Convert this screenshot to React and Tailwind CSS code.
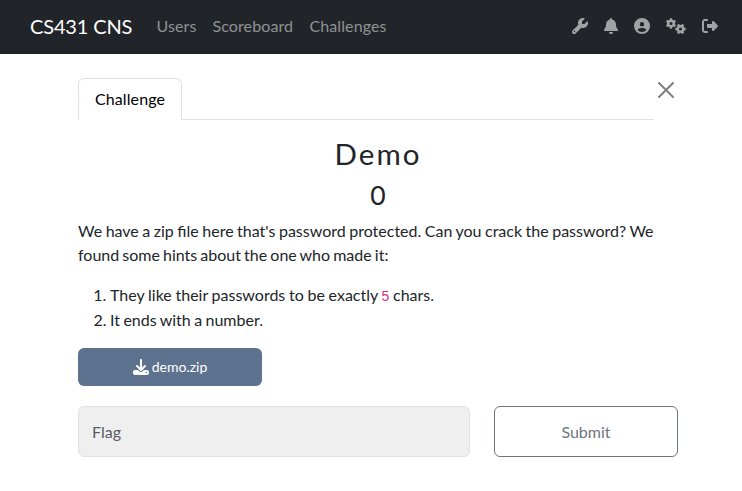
import { FaWrench, FaBell, FaCircleUser, FaGears, FaRightFromBracket, FaDownload } from "react-icons/fa6";

export default function App() {
  return (
    <div className="h-[491px] w-[742px] overflow-hidden bg-white font-[Lato,sans-serif] text-[16px] leading-6 text-[#212529]">
      <nav className="flex h-[54px] items-center border-b border-[#1b1e21] bg-[#212529] pb-px pl-[30px] pr-6 text-[#909294]">
        <span className="mr-6 w-[102.5px] whitespace-nowrap text-[20px] leading-[30px] tracking-[-0.15px] text-white">CS431 CNS</span>
        <div className="flex gap-4">
          <span className="w-10 tracking-[0.1px]">Users</span>
          <span className="w-[81px] tracking-[0.1px]">Scoreboard</span>
          <span className="tracking-[0.1px]">Challenges</span>
        </div>
        <div className="ml-auto flex items-center gap-4 text-[#a0a2a3]">
          <FaWrench className="size-4" />
          <FaBell className="h-4 w-[14px]" />
          <FaCircleUser className="size-4" />
          <FaGears className="h-4 w-5" />
          <FaRightFromBracket className="size-4" />
        </div>
      </nav>
      <main className="ml-[78px] w-[600px] pt-6">
        <div className="flex h-[42px]">
          <div className="flex w-[576px] border-b border-[#dee2e6]">
            <div className="-mb-px flex h-[42px] w-[104px] items-center justify-center rounded-t-md border border-b-0 border-[#dee2e6] bg-white pb-0.5 tracking-[0.1px] text-black">Challenge</div>
          </div>
          <svg className="ml-1 mt-1 size-4" viewBox="0 0 16 16" stroke="#7f7f7f" strokeWidth="2" strokeLinecap="round">
            <path d="M1 1l14 14M15 1L1 15" />
          </svg>
        </div>
        <h2 className="mt-4 text-center text-[29.5px] leading-[36px] tracking-[2px]">Demo</h2>
        <h3 className="mt-[7px] text-center text-[26.5px] leading-[32px]">0</h3>
        <p className="mt-2 w-[590px] whitespace-nowrap [word-spacing:-0.58px]">We have a zip file here that's password protected. Can you crack the password? We</p>
        <p className="[word-spacing:-1px]">found some hints about the one who made it:</p>
        <ol className="mt-4 list-decimal pl-8">
          <li className="h-6 [word-spacing:-0.4px]">They like their passwords to be exactly <code className="align-baseline font-['Liberation_Sans',sans-serif] text-[14px] leading-none text-[#d63384]">5</code> chars.</li>
          <li className="mt-px h-6 [word-spacing:-0.7px]">It ends with a number.</li>
        </ol>
        <button className="mt-4 flex h-[38px] w-[184px] items-center justify-center gap-[3px] rounded-md bg-[#5d728f] text-[14px] text-white">
          <FaDownload className="size-4" />demo.zip
        </button>
        <div className="mt-5 flex gap-6">
          <div className="flex h-[51px] w-[392px] items-center rounded-md border border-[#dee2e6] bg-[#efefef] pl-[13px] text-[#595c5f]">Flag</div>
          <button className="h-[51px] w-[184px] rounded-md border border-[#6c757d] text-[#6c757d]">Submit</button>
        </div>
      </main>
    </div>
  );
}
